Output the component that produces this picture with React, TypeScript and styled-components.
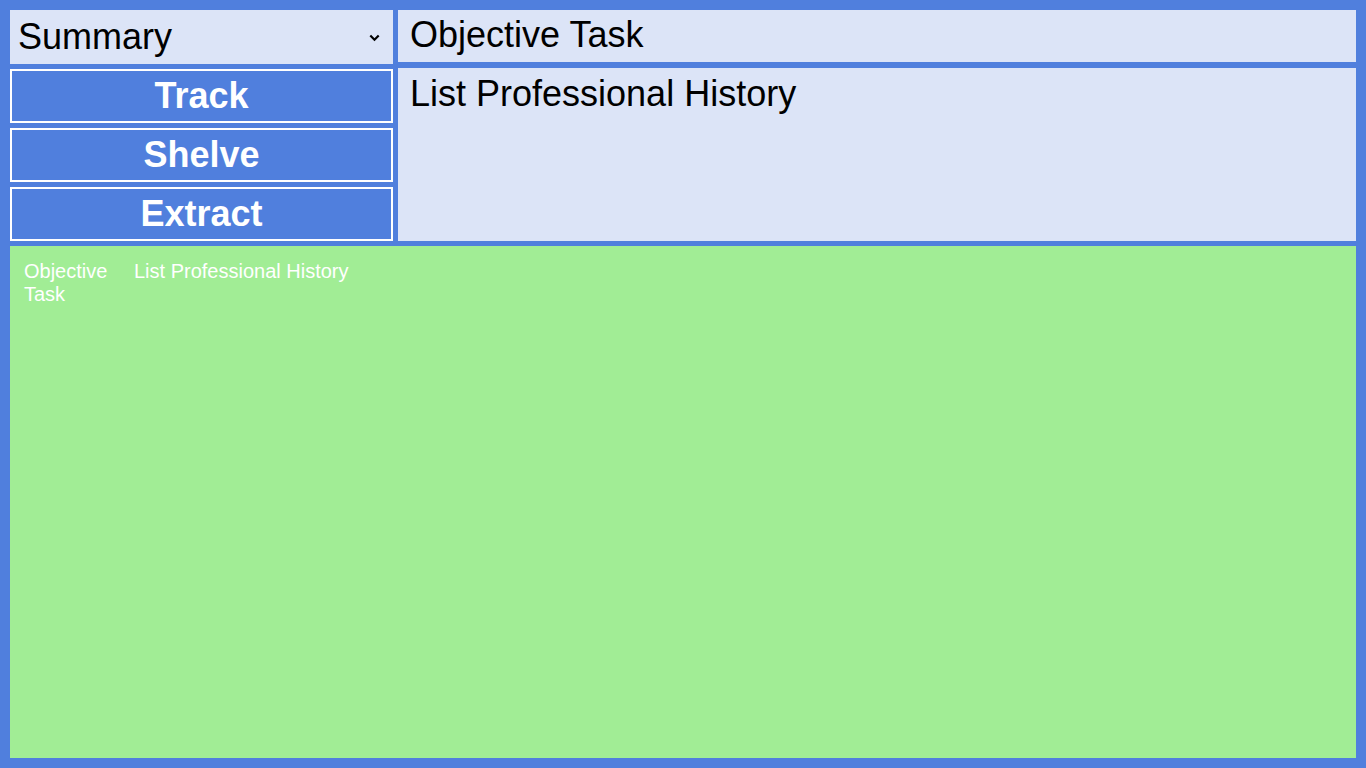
import React from "react";
import styled, { createGlobalStyle } from "styled-components";

const Global = createGlobalStyle`
  html, body { margin: 0; padding: 0; }
  body { background: #507fdd; font-family: "Liberation Sans", Arial, sans-serif; }
  * { box-sizing: border-box; }
`;

const Page = styled.div`
  width: 1366px;
  height: 768px;
  padding: 10px;
  background: #507fdd;
  display: flex;
  flex-direction: column;
  gap: 5px;
`;

const Top = styled.div`
  display: grid;
  grid-template-columns: 383px 1fr;
  column-gap: 5px;
  height: 231px;
`;

const LeftCol = styled.div`
  display: flex;
  flex-direction: column;
  gap: 5px;
`;

const SelectBox = styled.div`
  position: relative;
  height: 54px;
  background: #dce4f7;
  display: flex;
  align-items: center;
  padding: 0 8px;
  font-size: 36px;
  color: #000;
`;

const Chevron = styled.svg`
  position: absolute;
  right: 13px;
  top: 24px;
  display: block;
`;

const ActionButton = styled.button`
  height: 54px;
  background: #507fdd;
  border: 2px solid #fff;
  color: #fff;
  font-family: "Liberation Sans", Arial, sans-serif;
  font-weight: bold;
  font-size: 36px;
  padding: 0;
  display: flex;
  align-items: center;
  justify-content: center;
`;

const RightCol = styled.div`
  display: flex;
  flex-direction: column;
  gap: 6px;
`;

const TitleField = styled.div`
  height: 52px;
  background: #dce4f7;
  padding: 4px 12px 0;
  font-size: 36px;
  color: #000;
`;

const DescField = styled.div`
  flex: 1;
  background: #dce4f7;
  padding: 5px 12px;
  font-size: 36px;
  color: #000;
`;

const Board = styled.div`
  flex: 1;
  background: #a1ed95;
  padding: 14px 14px;
`;

const Row = styled.div`
  display: grid;
  grid-template-columns: 96px auto;
  column-gap: 14px;
  justify-content: start;
  color: #fff;
  font-size: 20px;
  line-height: 23px;
`;

const Cell = styled.div``;

export default function App() {
  return (
    <>
      <Global />
      <Page>
        <Top>
          <LeftCol>
            <SelectBox>
              Summary
              <Chevron width="11" height="8" viewBox="0 0 11 8">
                <polyline points="1.3,1.5 5.5,5.7 9.7,1.5" fill="none" stroke="#000" strokeWidth="2.2" />
              </Chevron>
            </SelectBox>
            <ActionButton>Track</ActionButton>
            <ActionButton>Shelve</ActionButton>
            <ActionButton>Extract</ActionButton>
          </LeftCol>
          <RightCol>
            <TitleField>Objective Task</TitleField>
            <DescField>List Professional History</DescField>
          </RightCol>
        </Top>
        <Board>
          <Row>
            <Cell>Objective Task</Cell>
            <Cell>List Professional History</Cell>
          </Row>
        </Board>
      </Page>
    </>
  );
}
